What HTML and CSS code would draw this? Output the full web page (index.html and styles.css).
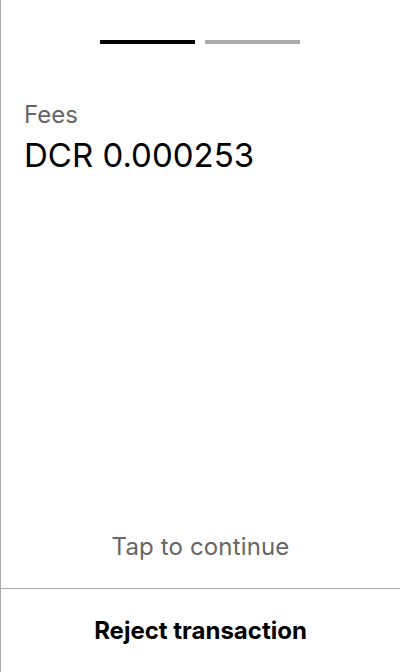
FILE: index.html
```html
<!DOCTYPE html>
<html>
<head>
<meta charset="utf-8">
<link rel="stylesheet" href="styles.css">
</head>
<body>
<div class="screen">
  <div class="progress">
    <span class="seg seg-active"></span>
    <span class="seg seg-idle"></span>
  </div>
  <div class="content">
    <div class="label">Fees</div>
    <div class="value">DCR 0.000253</div>
  </div>
  <div class="tap">Tap to continue</div>
  <div class="footer">Reject transaction</div>
</div>
</body>
</html>
```

FILE: styles.css
```css
html, body {
  margin: 0;
  padding: 0;
  background: #fff;
}
body {
  font-family: Inter, "Noto Sans", sans-serif;
  color: #000;
}
.screen {
  width: 400px;
  height: 672px;
  box-sizing: border-box;
  border-left: 1px solid #aaa;
  display: flex;
  flex-direction: column;
}
.progress {
  display: flex;
  justify-content: center;
  gap: 10px;
  padding-top: 40px;
  padding-right: 1px;
}
.seg {
  display: block;
  width: 95px;
  height: 4px;
}
.seg-active { background: #000; }
.seg-idle { background: #aaa; }
.content {
  padding: 55px 23px 0;
  flex: 1;
}
.label {
  font-size: 24px;
  line-height: 32px;
  color: #666;
}
.value {
  font-size: 33px;
  line-height: 40px;
  margin-top: 4px;
}
.tap {
  text-align: center;
  font-size: 24px;
  line-height: 32px;
  letter-spacing: 0.15px;
  color: #666;
  padding-bottom: 25px;
}
.footer {
  border-top: 1px solid #aaa;
  height: 83px;
  display: flex;
  align-items: center;
  justify-content: center;
  font-size: 24px;
  line-height: 32px;
  font-weight: 700;
}
```
